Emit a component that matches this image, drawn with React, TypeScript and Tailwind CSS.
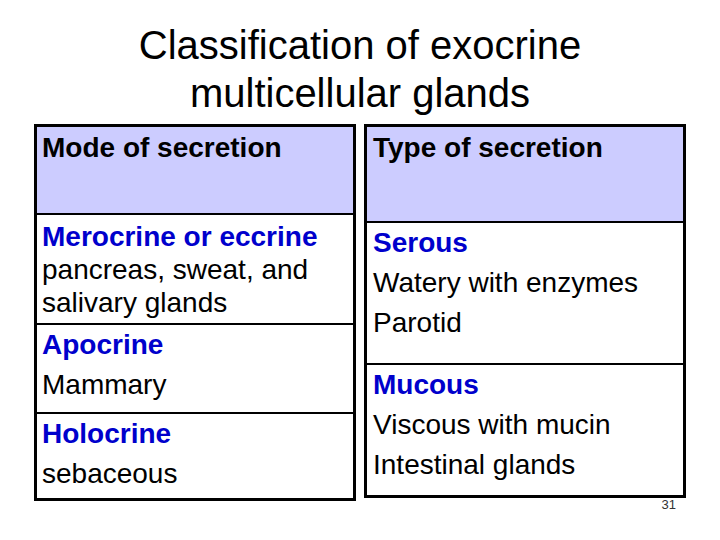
const font = "font-['Liberation_Sans',Arial,sans-serif]";

function Label({ children }: { children: React.ReactNode }) {
  return <div className="font-bold text-[#0000cc]">{children}</div>;
}

export default function App() {
  return (
    <div className={`${font} w-[720px] h-[540px] bg-white text-black overflow-hidden`}>
      <h1 className="pt-[21px] text-center text-[40px] leading-[48px] font-normal">
        Classification of exocrine
        <br />
        multicellular glands
      </h1>

      <div className="mt-[7px] flex items-start gap-[8px] pl-[34px] text-[28px]">
        {/* mode of secretion */}
        <div className="w-[322px] border-[3px] border-black">
          <div className="h-[86px] bg-[#ccccff] pl-[5px] pt-[4px] font-bold leading-[33px]">
            Mode of secretion
          </div>
          <div className="h-[110px] border-t-2 border-black pl-[5px] pt-[5px] leading-[33px]">
            <Label>Merocrine or eccrine</Label>
            <div>pancreas, sweat, and</div>
            <div>salivary glands</div>
          </div>
          <div className="h-[89px] border-t-2 border-black pl-[5px] leading-[40px]">
            <Label>Apocrine</Label>
            <div>Mammary</div>
          </div>
          <div className="h-[86px] border-t-2 border-black pl-[5px] leading-[40px]">
            <Label>Holocrine</Label>
            <div>sebaceous</div>
          </div>
        </div>

        {/* type of secretion */}
        <div className="w-[322px] border-[3px] border-black">
          <div className="h-[94px] bg-[#ccccff] pl-[6px] pt-[4px] font-bold leading-[33px]">
            Type of secretion
          </div>
          <div className="h-[142px] border-t-2 border-black pl-[6px] leading-[40px]">
            <Label>Serous</Label>
            <div>Watery with enzymes</div>
            <div>Parotid</div>
          </div>
          <div className="h-[132px] border-t-2 border-black pl-[6px] leading-[40px]">
            <Label>Mucous</Label>
            <div>Viscous with mucin</div>
            <div>Intestinal glands</div>
          </div>
        </div>
      </div>

      <div className="-mt-[4px] flex justify-end pr-[44px] text-[13px] leading-[16px] text-[#333]">
        31
      </div>
    </div>
  );
}
